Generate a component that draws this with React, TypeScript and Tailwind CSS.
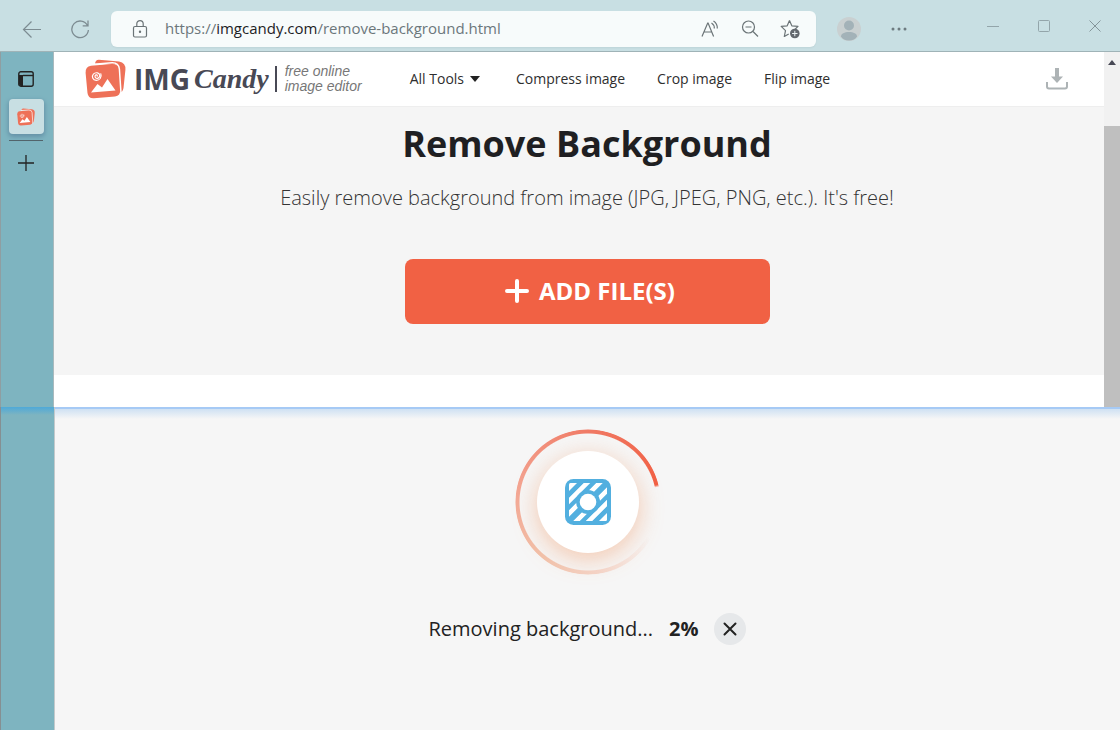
import { useState } from 'react';

const NAV_LINKS = ['Compress image', 'Crop image', 'Flip image'];

interface IconProps {
  className?: string;
}

function CandyMark({ className }: IconProps) {
  return (
    <svg viewBox="0 0 41 40" className={className} aria-hidden="true">
      <path d="M14 .8 34 2.500Q41 3.500 40.400 11L38.500 29Q37.800 33 34.800 33.600L31 5.500 10 4.800Q10.500.6 14 .8Z" fill="#ee7158" />
      <path d="M6 6.800 26.500 5Q32.500 4.600 33.200 10.500L35.200 31Q35.600 36.600 30 37.400L9 39.200Q3.200 39.600 2.500 34L.6 14Q.2 7.600 6 6.800Z" fill="#ee7158" />
      <path d="M9 5.200 27 3.800Q33.600 3.600 34.400 10L36 34" fill="none" stroke="#fff" strokeWidth="1.500" />
      <path d="m6 33.500 6.500-8.500 4.500 3.500L22.500 20 30.500 31.500Z" fill="#fff" />
      <path
        d="M12.200 17.200c.6-1.400-1.400-1.900-2-.6-.8 1.900 1.100 3.400 3 2.500 2.400-1.200 1.900-4.600-.7-5.200-3.400-.8-6 2.300-4.800 5.200 1.300 3 5.600 3 7.500.4 1-1.500 1.200-3.200.6-4.700"
        fill="none"
        stroke="#fff"
        strokeWidth="1.200"
        strokeLinecap="round"
      />
    </svg>
  );
}

function BackIcon() {
  return (
    <svg viewBox="0 0 20 20" className="size-5" fill="none" stroke="#7d8c92" strokeWidth="1.200">
      <path d="M19 10.500H1.500M9.500 2.500l-8 8 8 8" />
    </svg>
  );
}

function ReloadIcon() {
  return (
    <svg viewBox="0 0 20 20" className="size-5" fill="none" stroke="#7d8c92" strokeWidth="1.300">
      <path d="M17.500 6.500a8.300 8.300 0 1 0 .9 4.500M18 1.500v5.300h-5.300" />
    </svg>
  );
}

function LockIcon() {
  return (
    <svg viewBox="0 0 16 20" className="h-5 w-4" fill="none" stroke="#6b7477" strokeWidth="1.200">
      <rect x="1.500" y="7.500" width="13" height="10.500" rx="1.500" />
      <path d="M4.800 7.500V4.800a3.200 3.200 0 0 1 6.400 0v2.700" />
      <circle cx="8" cy="12.700" r=".6" fill="#6b7477" />
    </svg>
  );
}

function ReadAloudIcon() {
  return (
    <svg viewBox="0 0 20 20" className="size-5" fill="none" stroke="#6b7477" strokeWidth="1.200">
      <path d="M2 17.500 7.700 4h.4l5.500 13.500M4 13h7.800" />
      <path d="M11.500 4a6 6 0 0 1 2.800 5.500M13.500 2a8.500 8.500 0 0 1 3.800 7.500" />
    </svg>
  );
}

function ZoomOutIcon() {
  return (
    <svg viewBox="0 0 20 20" className="size-5" fill="none" stroke="#6b7477" strokeWidth="1.200">
      <circle cx="8.500" cy="8" r="6" />
      <path d="M5.500 8h6M13 12.500l5 5" />
    </svg>
  );
}

function FavoriteIcon() {
  return (
    <svg viewBox="0 0 20 20" className="size-5" fill="none" stroke="#6b7477" strokeWidth="1.200">
      <path d="m9.500 1.500 2.300 5.300 6.200.6-3.500 3.300M9.500 1.500 7.200 6.800l-6 .6 4.300 4.200-1.200 5.900 4.400-2.600" strokeLinejoin="round" />
      <circle cx="14.800" cy="14.500" r="4.800" fill="#63686e" stroke="none" />
      <path d="M14.800 11.800v5.400M12.100 14.500h5.400" stroke="#eef4f5" strokeWidth="1" />
    </svg>
  );
}

function RemoveBgIcon() {
  return (
    <svg viewBox="0 0 46 46" className="size-[46px]" aria-hidden="true">
      <defs>
        <clipPath id="stripe-area">
          <rect x="4" y="4" width="38" height="38" rx="1.500" />
        </clipPath>
      </defs>
      <rect width="46" height="46" rx="8.500" fill="#52afdf" />
      <g clipPath="url(#stripe-area)" stroke="#fff" strokeWidth="4.600">
        <path d="M0 0H16L0 16Z" fill="#fff" stroke="none" />
        <path d="M-2 28 28-2M-2 40.500 40.500-2" />
        <path d="M5.500 48 48 5.500M18 48 48 18" />
        <path d="M46 46H30L46 30Z" fill="#fff" stroke="none" />
      </g>
      <circle cx="23" cy="23" r="12" fill="#52afdf" />
      <circle cx="23" cy="23" r="8.300" fill="#fff" />
    </svg>
  );
}

function BrowserBar() {
  const [url, setUrl] = useState('https://imgcandy.com/remove-background.html');
  const host = 'imgcandy.com';
  const [scheme, path] = url.split(host);

  return (
    <header className="flex h-[52px] items-center border-b border-[#9fb3b7] bg-[#c8dfe3] pt-1.5 pl-[22px]">
      <button aria-label="Back"><BackIcon /></button>
      <button aria-label="Refresh" className="ml-7"><ReloadIcon /></button>
      <div className="ml-[21px] flex h-9 w-[705px] items-center rounded-md bg-[#f7fbfb] pr-4 pl-[21px] shadow-xs">
        <LockIcon />
        <a
          href={url}
          onClick={(e) => {
            e.preventDefault();
            setUrl(url);
          }}
          className="ml-[17px] flex-1 font-['Open_Sans',sans-serif] text-[15px] whitespace-nowrap text-[#6c777b]"
        >
          {scheme}<span className="text-[#1d2225]">{host}</span>{path}
        </a>
        <div className="flex gap-5">
          <button aria-label="Read aloud"><ReadAloudIcon /></button>
          <button aria-label="Zoom out"><ZoomOutIcon /></button>
          <button aria-label="Add to favorites"><FavoriteIcon /></button>
        </div>
      </div>
      <button aria-label="Profile" className="ml-[21px]">
        <svg viewBox="0 0 24 24" className="size-6">
          <circle cx="12" cy="12" r="12" fill="#c9d0d1" />
          <circle cx="12" cy="8.500" r="5" fill="#a3b2b8" />
          <path d="M4 19.500c0-3 3.500-4.500 8-4.500s8 1.500 8 4.500c-1.500 2.500-4 4-8 4s-6.500-1.500-8-4Z" fill="#a3b2b8" />
        </svg>
      </button>
      <button aria-label="Settings and more" className="ml-[30px]">
        <svg viewBox="0 0 16 4" className="h-1 w-4" fill="#6d7b80">
          <circle cx="2" cy="2" r="1.500" />
          <circle cx="8" cy="2" r="1.500" />
          <circle cx="14" cy="2" r="1.500" />
        </svg>
      </button>
      <div className="mr-[19px] mb-1.5 ml-auto flex items-center gap-[39px]">
        <button aria-label="Minimize">
          <svg viewBox="0 0 12 12" className="size-3" stroke="#93a5aa"><path d="M0 6.500h12" /></svg>
        </button>
        <button aria-label="Maximize">
          <svg viewBox="0 0 12 12" className="size-3" stroke="#93a5aa" fill="none"><rect x=".5" y=".5" width="11" height="11" rx="1" /></svg>
        </button>
        <button aria-label="Close window">
          <svg viewBox="0 0 12 12" className="size-3" stroke="#84959a"><path d="m.5.5 11 11m0-11-11 11" /></svg>
        </button>
      </div>
    </header>
  );
}

function TabStrip() {
  return (
    <aside className="flex w-[54px] shrink-0 flex-col items-center border-r border-l border-r-[#a9b9bd] border-l-[#8f9ea2] bg-[#7eb4c0] pt-[19px] pr-0.5">
      <button aria-label="Tab actions">
        <svg viewBox="0 0 16 16" className="size-4" fill="none" stroke="#222" strokeWidth="1.400">
          <rect x=".8" y=".8" width="14.400" height="14.400" rx="2" />
          <path d="M5 4.500h10" />
          <path d="M1 4h4v11H3a2 2 0 0 1-2-2Z" fill="#222" stroke="none" />
        </svg>
      </button>
      <button aria-label="Remove Background" className="mt-3 flex size-[35px] items-center justify-center rounded bg-[#c8dfe3] shadow-[0_2px_4px_1px_#6793a8]">
        <CandyMark className="size-[18px]" />
      </button>
      <hr className="mt-1.5 w-[34px] border-[#52646b]" />
      <button aria-label="New tab" className="mt-3.5">
        <svg viewBox="0 0 16 16" className="size-4" stroke="#222" strokeWidth="1.300"><path d="M8 0v16M0 8h16" /></svg>
      </button>
    </aside>
  );
}

function SiteHeader() {
  return (
    <header className="flex h-[55px] items-center border-b border-[#eeeeee] bg-white pr-[52px] pl-[31px]">
      <a href="#" className="flex items-center text-[#484955]">
        <CandyMark className="h-10 w-[41px]" />
        <span className="ml-2 text-[28px] leading-10 font-bold">IMG</span>
        <span className="ml-1 font-['Liberation_Serif',serif] text-[28px] leading-10 font-bold italic">Candy</span>
        <span className="ml-1.5 h-[26px] w-0.5 bg-[#484955]" />
        <span className="ml-2 font-['Liberation_Sans',sans-serif] text-sm leading-[15px] text-[#777] italic">
          free online<br />image editor
        </span>
      </a>
      <nav className="ml-12 flex items-center gap-8 text-sm text-[#2e2e2e]">
        <button className="mr-1 flex items-center gap-1.5">
          All Tools
          <svg viewBox="0 0 10 6" className="h-1.5 w-2.5" fill="#222"><path d="M0 0h10L5 6Z" /></svg>
        </button>
        {NAV_LINKS.map((label) => (
          <a key={label} href="#">{label}</a>
        ))}
      </nav>
      <button aria-label="Downloads" className="ml-auto">
        <svg viewBox="0 0 22 22" className="size-[22px]" fill="none" stroke="#adb3b5">
          <path d="M1 14v4.500q0 2 2 2h16q2 0 2-2V14" strokeWidth="2" />
          <path d="M11 0v10" strokeWidth="4" />
          <path d="M5 8.500h12l-6 6.500Z" fill="#adb3b5" stroke="none" />
        </svg>
      </button>
    </header>
  );
}

function Hero() {
  return (
    <section className="flex h-[268px] flex-col items-center bg-[#f5f5f5] pt-3">
      <h1 className="text-4xl leading-[50px] font-bold text-[#1f1f22]">Remove Background</h1>
      <p className="mt-4 text-xl leading-[26px] font-light text-[#333]">
        Easily remove background from image (JPG, JPEG, PNG, etc.). It's free!
      </p>
      <button className="mt-12 flex h-[65px] w-[365px] items-center justify-center gap-2.5 rounded-lg bg-[#f16144] pb-0.5 pl-1.5 text-2xl font-bold text-white">
        <svg viewBox="0 0 24 24" className="size-6" stroke="#fff" strokeWidth="4" strokeLinecap="round">
          <path d="M12 2v20M2 12h20" />
        </svg>
        ADD FILE(S)
      </button>
    </section>
  );
}

function Scrollbar() {
  return (
    <div className="absolute inset-y-0 right-0 flex w-4 flex-col items-center bg-[#f1f1f1]">
      <svg viewBox="0 0 8 5" className="mt-2 h-[5px] w-2" fill="#484955"><path d="M4 0 8 5H0Z" /></svg>
      <div className="mt-[61px] w-full flex-1 bg-[#bfbfbf]" />
    </div>
  );
}

function Progress({ percent }: { percent: number }) {
  return (
    <section className="flex flex-1 flex-col items-center bg-[#f6f6f6] pt-[22px]">
      <div className="relative flex size-[146px] items-center justify-center">
        <div className="absolute inset-0 rounded-full bg-[conic-gradient(#f07a65_0deg,#f15f43_76deg,transparent_78deg,transparent_120deg,#f4d3c6_170deg,#f1c0a8_220deg,#f3a592_280deg,#f07a65_360deg)] [mask:radial-gradient(closest-side,transparent_68px,#000_69px,#000_72px,transparent_73px)]" />
        <div className="flex size-[102px] items-center justify-center rounded-full bg-white shadow-[0_6px_24px_#f1814466]">
          <RemoveBgIcon />
        </div>
      </div>
      <div className="mt-[38px] flex items-center gap-4 text-xl text-[#222]" role="status">
        <span>Removing background...</span>
        <span className="font-bold">{percent}%</span>
        <button aria-label="Cancel" className="flex size-8 items-center justify-center rounded-full bg-[#e6e8ea]">
          <svg viewBox="0 0 14 14" className="size-3.5" stroke="#222" strokeWidth="2" strokeLinecap="round">
            <path d="m1.500 1.500 11 11m0-11-11 11" />
          </svg>
        </button>
      </div>
    </section>
  );
}

export default function App() {
  return (
    <div className="flex min-h-screen flex-col bg-[#f5f5f5] font-['Open_Sans',sans-serif]">
      <BrowserBar />
      <div className="flex">
        <TabStrip />
        <main className="relative flex-1">
          <SiteHeader />
          <Hero />
          <div className="h-8 bg-white" />
          <Scrollbar />
        </main>
      </div>
      <div className="relative flex flex-1">
        <div className="w-[55px] shrink-0 border-r border-l border-r-[#c3c9cb] border-l-[#858f92] bg-[#7eb4c0]">
          <div className="h-2 bg-linear-to-b from-[#4fa9d8] to-transparent" />
        </div>
        <Progress percent={2} />
        <div className="absolute top-0 right-0 left-[55px] h-3 border-t-2 border-[#a6caf5] bg-linear-to-b from-[#cfe1f3] to-transparent" />
      </div>
    </div>
  );
}
